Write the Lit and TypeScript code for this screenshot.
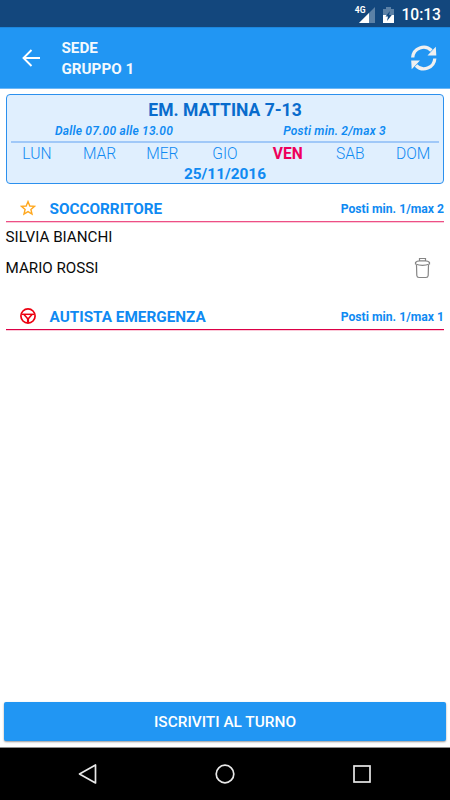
import { LitElement, html, css } from "lit";
import { customElement } from "lit/decorators.js";
import { classMap } from "lit/directives/class-map.js";

const DAYS = ["LUN", "MAR", "MER", "GIO", "VEN", "SAB", "DOM"];

const star = html`<svg width="16" height="16" viewBox="0 0 16 16">
  <path d="M8 1.6 L9.8 6 L14.5 6.4 L10.9 9.5 L12 14.1 L8 11.6 L4 14.1 L5.1 9.5 L1.5 6.4 L6.2 6 Z"
    fill="none" stroke="#ffa81f" stroke-width="1.4" stroke-linejoin="miter" />
</svg>`;

const wheel = html`<svg width="16" height="16" viewBox="0 0 16 16" fill="none" stroke="#ec0010">
  <circle cx="8" cy="8" r="7.1" stroke-width="1.7" />
  <path d="M1.5 6.300H14.500" stroke-width="1.5" />
  <path d="M4 6.500L8 11L12 6.500" stroke-width="1.500" />
  <path d="M8 10V14.800" stroke-width="2.200" />
</svg>`;

@customElement("app-root")
export class AppRoot extends LitElement {
  static styles = css`
    :host {
      display: flex;
      flex-direction: column;
      height: 800px;
      width: 450px;
      background: #fff;
      font-family: Roboto, "Liberation Sans", sans-serif;
      color: #0f8af2;
      white-space: nowrap;
      overflow: hidden;
    }
    svg { display: block; flex: none; }
    .status {
      height: 27px;
      box-sizing: border-box;
      background: #13477d;
      color: #fff;
      display: flex;
      justify-content: flex-end;
      align-items: center;
      padding: 2px 9px 0 0;
      font-size: 15.6px;
      font-weight: 500;
    }
    .signal { margin-right: 8px; }
    .battery { margin-right: 7px; }
    .net { font-size: 8.5px; font-weight: 700; align-self: flex-start; line-height: 10px; padding-top: 3px; margin-right: -6px; z-index: 1; }
    .bar {
      height: 62px;
      box-sizing: border-box;
      background: #2196f3;
      border-top: 1px solid #1c87de;
      border-bottom: 1px solid #6bb8f7;
      display: flex;
      align-items: center;
      padding: 0 12px 0 21px;
      color: #fff;
    }
    .place { flex: 1; margin-left: 20.5px; padding-top: 2px; font-size: 15.2px; font-weight: 700; line-height: 21px; opacity: .95; }
    .card {
      margin: 5px 6px 0;
      height: 90px;
      box-sizing: border-box;
      border: 1px solid #2b90ee;
      border-radius: 4px;
      background: #e0effe;
      padding: 0 4px;
      text-align: center;
    }
    .title { font-size: 17.5px; font-weight: 700; line-height: 22px; color: #096ccd; padding-top: 4px; }
    .info {
      display: grid;
      grid-template-columns: 206px 209px;
      justify-content: space-between;
      height: 22px;
      box-sizing: border-box;
      border-bottom: 2px solid #a0c8f8;
      font-size: 12px;
      font-style: italic;
      font-weight: 600;
      letter-spacing: .22px;
      line-height: 20px;
    }
    .days { display: grid; grid-template-columns: repeat(7, 62.7px); justify-content: center; font-size: 15.6px; line-height: 23px; font-weight: 300; }
    .today { color: #ee005b; font-weight: 700; }
    .date { font-size: 15.4px; font-weight: 700; line-height: 17px; }
    .role {
      display: flex;
      align-items: center;
      margin: 0 6px;
      height: 27px;
      box-sizing: border-box;
      border-bottom: 1px solid #dc0046;
      box-shadow: 0 1px 0 #fbc9d8;
      padding: 1px 0 0 13.5px;
    }
    .role svg { margin-bottom: 1px; }
    .first { margin-top: 11px; border-bottom-color: #ed4f86; }
    .second { margin-top: 19px; }
    .name { flex: 1; margin-left: 14px; font-size: 15.3px; font-weight: 700; }
    .seats { font-size: 12.2px; font-weight: 700; }
    .person {
      display: flex;
      align-items: center;
      justify-content: space-between;
      margin-left: 5.5px;
      height: 33px;
      padding-right: 19px;
      font-size: 15.2px;
      color: #0a0a0a;
    }
    .silvia { height: 29px; }
    .grow { flex: 1; }
    .join {
      margin: 0 4px;
      height: 39px;
      border: 0;
      border-radius: 2px;
      background: #2196f3;
      box-shadow: 0 1px 2px rgba(0, 0, 0, .4);
      color: #fff;
      font: 500 15.4px Roboto, sans-serif;
    }
    .nav {
      margin-top: 6px;
      height: 53px;
      box-sizing: border-box;
      border-top: 1px solid #8d8d8d;
      background: #000;
      display: flex;
      align-items: center;
      justify-content: center;
      gap: 117px;
    }
  `;

  render() {
    return html`
      <div class="status">
        <span class="net">4G</span>
        <svg class="signal" width="16" height="16" viewBox="0 0 16 16">
          <path d="M16 0V16H0Z" fill="#5c81a6" /><path d="M10 6V16H0Z" fill="#fff" />
        </svg>
        <svg class="battery" width="11" height="16" viewBox="0 0 11 16">
          <path d="M0 2H3V0H8V2H11V8H0Z" fill="#5c81a6" /><path d="M0 8H11V16H0Z" fill="#fff" />
          <path d="M7 4L2.5 9.5H5L4 14L8.8 8H6Z" fill="#13477d" />
        </svg>
        <span>10:13</span>
      </div>
      <div class="bar">
        <svg width="20" height="18" viewBox="0 0 20 18" fill="none" stroke="#fff" stroke-width="1.9">
          <path d="M10.5 1L2.5 9L10.5 17M2.5 9H19" />
        </svg>
        <div class="place">SEDE<br />GRUPPO 1</div>
        <svg width="28" height="28" viewBox="0 0 28 28">
          <path d="M2.700 13.500A11 11 0 0 1 21.500 6.500M24.800 14.500A11 11 0 0 1 6 21.500" fill="none" stroke="#f0f0f0" stroke-width="3.300" />
          <path d="M25.800 2.700L26.300 11.500H17.500ZM1.700 25.300L1.200 16.500H10Z" fill="#f0f0f0" />
        </svg>
      </div>
      <div class="card">
        <div class="title">EM. MATTINA 7-13</div>
        <div class="info"><span>Dalle 07.00 alle 13.00</span><span>Posti min. 2/max 3</span></div>
        <div class="days">
          ${DAYS.map((d) => html`<span class=${classMap({ today: d === "VEN" })}>${d}</span>`)}
        </div>
        <div class="date">25/11/2016</div>
      </div>
      <div class="role first">${star}<span class="name">SOCCORRITORE</span><span class="seats">Posti min. 1/max 2</span></div>
      <div class="person silvia">SILVIA BIANCHI</div>
      <div class="person">
        MARIO ROSSI
        <svg width="17" height="22" viewBox="0 0 17 22" fill="none" stroke="#858585" stroke-width="1.2">
          <path d="M5.5 3.500V1.500H11.500V3.500M1.500 7V5.500Q3 3.800 5.500 3.800H11.500Q14 3.800 15.500 5.500V7Q12 8.300 8.500 8.300Q5 8.300 1.500 7Z" />
          <path d="M2.500 8L2.800 18.500Q3 20.500 5 20.500H12Q14 20.500 14.200 18.500L14.500 8" />
        </svg>
      </div>
      <div class="role second">${wheel}<span class="name">AUTISTA EMERGENZA</span><span class="seats">Posti min. 1/max 1</span></div>
      <div class="grow"></div>
      <button class="join">ISCRIVITI AL TURNO</button>
      <div class="nav">
        <svg width="20" height="20" viewBox="0 0 20 20" fill="none" stroke="#e8e8e8" stroke-width="1.7"><path d="M1.500 10L17.500 1V19Z" stroke-linejoin="round" /></svg>
        <svg width="20" height="20" viewBox="0 0 20 20" fill="none" stroke="#e8e8e8" stroke-width="1.7"><circle cx="10" cy="10" r="8.800" /></svg>
        <svg width="20" height="20" viewBox="0 0 20 20" fill="none" stroke="#e8e8e8" stroke-width="1.7"><rect x="2" y="2" width="16" height="16" /></svg>
      </div>
    `;
  }
}
